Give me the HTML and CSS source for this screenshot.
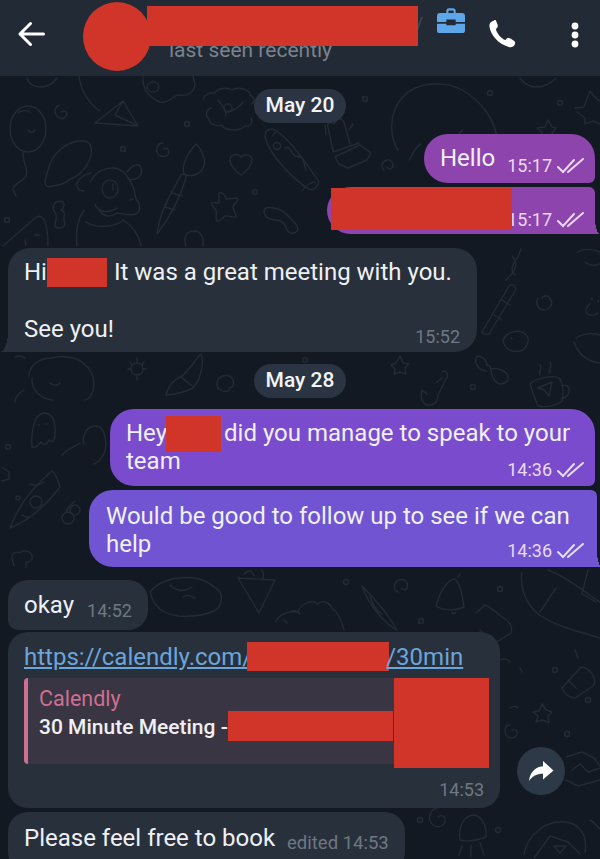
FILE: index.html
```html
<!DOCTYPE html>
<html lang="en">
<head>
<meta charset="utf-8">
<title>Chat</title>
<link rel="stylesheet" href="styles.css">
</head>
<body>
<div class="screen">
  <!-- faint doodle wallpaper behind the conversation -->
  <svg class="wallpaper" width="600" height="859" viewBox="0 0 600 859" fill="none" stroke="#222b36" stroke-width="1.400" stroke-linecap="round" stroke-linejoin="round">
    <!-- balloon -->
    <ellipse cx="28" cy="129" rx="18" ry="23"/><path d="M24 152c-3 2 0 5 0 9 2 6 4 10 2 15-2 5-12 7-13 13l3 7M18 113c4-3 9-3 12-1M28 130c2 3 5 3 7 0"/>
    <path d="M60 105c-5 1-7 8-2 12 4 3 9 0 9-3 0-3-4-4-6-2"/>
    <!-- paper plane -->
    <path d="M95 123l28-22 15 25zM95 123l43 3M123 101l-8 14 23 11"/>
    <path d="M79 76c2 15 10 28 21 35M27 78c3 12 22 12 30 0"/>
    <!-- hat -->
    <path d="M46 178c-3 8 2 10 7 8 6-1 13-2 17-7 6-1 14-8 18-16 5-9 5-20-3-22-8-1-20 2-29 13-5 5-8 14-10 24z"/>
    <circle cx="123" cy="149" r="2.500"/><circle cx="7" cy="220" r="2.500"/><circle cx="187" cy="124" r="2.500"/><circle cx="255" cy="192" r="2.500"/>
    <!-- dog -->
    <path d="M84 191c-6 0-8-4-7-8 2-5 8-9 14-10M127 172c3-3 6-8 11-7 4 1 5 8 1 12-3 3-7 3-11 2"/>
    <path d="M90 182c8-16 28-18 36-7 7 9 8 14 10 24 5 5 5 14-1 15-5 2-12 0-18-1-8 5-14 3-18-3M95 204c2 8 14 10 22 4"/><ellipse cx="110" cy="189" rx="8" ry="9"/><path d="M113 184v6M130 200l3-1"/>
    <path d="M84 210c-8 12-8 24-7 36M123 220c10 6 16 16 18 26M86 222c8 6 28 6 38-2"/>
    <path d="M55 203c4-3 8-2 9 1 0 3-1 5-3 6 3 1 4 4 3 7s3 8-1 10-9 1-8-3 2-7 1-10c-2-3-5-6-1-11z"/>
    <path d="M3 246l32-28c4-3 7-2 9 2 4 7 4 18 4 26M35 235h5M25 240l1 5"/>
    <!-- shell and palette -->
    <path d="M204 100c-2-4 6-8 11-7 2-5 12-6 17-3 8-4 18 0 18 5 4 2 6 5 2 9M211 108c-5 2-6 8-2 11 0 5 8 8 12 6 4 6 18 7 24 1 6 1 8-4 6-8M218 100c4 6 8 8 8 16M243 102c-4 6-10 9-17 10"/><circle cx="228" cy="108" r="4"/>
    <path d="M143 76c-1 14 7 22 17 26 10 2 13-8 20-7 8 2 14-4 15-10l-2-9"/><ellipse cx="153" cy="87" rx="6" ry="5"/>
    <path d="M163 143c-6 0-8 7-5 11 4 4 10 3 11-2 0-3-3-5-5-3"/>
    <!-- paint brush -->
    <path d="M157 234c3-24 14-40 24-59 2-2 6-1 5 3-5 17-15 38-29 56zM165 207l10 3M172 193l10 3M184 174c-3-8 3-20 12-30 5 4 10 16 8 22-3 8-12 12-20 8z"/>
    <path d="M230 160c0-6 8-7 11-3 3-3 11-3 11 3 0 6-7 12-11 15-4-3-11-8-11-15z"/>
    <path d="M219 193c3-1 6 1 7 6l11-1c3 2-3 6-4 9 0 3 4 8 3 10-4 1-8-2-11-1-3 2-6 7-8 5-2-3 0-8-1-11-2-2-5-5-4-7 3-1 5 0 7 0z"/>
    <path d="M264 211c0-4 6-4 10-3 9 1 14 8 20 14 4 4 6 9 0 11-5 1-7-2-8-6-2-4-6-7-10-7-4 0-12-2-12-9z"/>
    <path d="M186 246c-3-8 0-15 8-15s10 8 9 15"/>
    <!-- hot dog -->
    <path d="M265 137c0-8 6-9 10-7 14 8 30 32 43 50 2 4-4 12-9 9-14-8-40-34-44-52z"/><path d="M277 131c-3 2-4 3-4 5M285 148c4-2 6 3 8 6 3 4 8 1 10 6l3 10"/><circle cx="277" cy="146" r="3.500"/><path d="M303 190c2-4 8-8 12-8"/>
    <!-- cactus -->
    <path d="M333 151l-5-24c-2-4 4-6 6-3l3-4c2-2 6-1 7 2l6 22M326 135l-1-10M349 130l4-6M335 157l25-12 11 8-4 7-19 8-9-4zM333 152l26-9"/>
    <path d="M384 170c-4-3-2-9 3-10 4-1 8 4 5 8-2 2-4 1-5-1"/>
    <circle cx="365" cy="99" r="2.500"/><circle cx="490" cy="93" r="2.500"/><circle cx="560" cy="103" r="2.500"/>
    <!-- large creature -->
    <path d="M398 150c-8-12-10-36 4-52 12-16 42-18 60-8 18 10 34 30 35 50 1 12 14 16 22 20M409 160c4-4 4-12 12-16M463 130c-8 4-6 24 10 30"/>
    <path d="M575 108l9-1 6-16c3 4 7 9 10 10M577 112l8 6 0 6 8-3 7 3"/>
    <path d="M537 128l8-1 3-7 4 7 4 1-4 5 1 5-6-2-6 2 1-6z"/><path d="M520 78c8 12 24 12 36 0"/>
    <!-- right of the first card -->
    <path d="M482 332l27-46c4-3 8 0 6 5l-26 43c-3 1-6 0-7-2zM494 315l8 5M502 300l8 5"/>
    <path d="M506 280c8-8 14-14 6-24M515 275c-5-4-3-12 3-18l3-8"/>
    <path d="M538 298c-3 5 0 12 6 12s9-6 7-10c-2-5-7-5-9-2"/>
    <path d="M590 304c-3 2-4 5-4 8 2 4 8 4 12 1M592 298v2M598 300v2"/>
    <path d="M503 340c4-9 18-12 24-4 3 4 0 13-7 15-8 2-16-2-17-11zM511 338l1 1"/>
    <path d="M576 338c7-5 18-5 24-3M574 342c3 10 12 20 26 21"/>
    <path d="M578 252c6-4 15-3 22 0M585 262c5 4 10 4 15 2"/>
    <!-- bow, cup, hook -->
    <path d="M487 364c-2-7-10-10-11-6-2 5 3 12 10 13M491 369c6-2 16 2 17 8 1 6-8 9-12 5-3-3-5-9-5-13zM486 365c3 0 5 2 5 5"/>
    <path d="M530 384c6-6 25-10 30-5 3 6 4 15 2 22-6 5-18 7-24 5-3-7-6-15-8-22zM562 386c5-2 8 1 7 6-1 4-4 6-8 7M538 388l14-6-3 14-5-6z"/><path d="M540 365c3 4-2 6 0 10M550 362c3 4-2 7 0 11"/>
    <path d="M442 372c3-2 7 1 5 5l-9 18c0 7-5 11-10 10-6-1-8-8-6-15l5 4M442 378l-5 4"/>
    <path d="M396 363l4-7 3 7 6 1-4 4 1 6-6-2-6 2 1-5-4-4z"/>
    <!-- brush and ball -->
    <path d="M166 395c3-12 11-17 16-19 8-6 14-18 19-22 3 6 1 24-8 34-8 4-20 7-27 7zM181 376c3 4 8 8 13 11"/>
    <path d="M230 390c-6 4-14-1-13-7 1-7 10-10 15-5 3 4 2 10-3 10"/><circle cx="137" cy="369" r="6"/><path d="M137 358v4M128 369h3M137 380v-4M146 369h-3M130 362l2 3M144 362l-2 3"/>
    <path d="M29 376c0-10 10-18 22-18 16-4 32 0 40 14 6 12 2 26-6 28M32 378c-1 12 8 20 20 22M50 383c3 3 8 3 10 0M15 357c3-2 6-1 10 1M24 390c-5 3-9 7-9 12"/>
    <circle cx="305" cy="360" r="2.500"/><circle cx="473" cy="387" r="2.500"/>
    <!-- ghost, bird, pizza -->
    <path d="M32 447c-1-16 2-33 12-34 10 0 12 12 11 22-1 7-3 8-6 5-2 5-6 6-8 2-3 4-6 6-9 5zM38 425h1M46 424h1"/>
    <path d="M62 455c8-8 12-8 18-12M84 444c-2-8 2-18 12-18 8 0 9 10 10 18 0 8-4 16-12 20"/>
    <path d="M3 468l6 4 0 7-7 2"/>
    <path d="M10 528c8-22 24-42 42-57 4 3 6 9 8 16-14 18-32 34-50 41z"/><circle cx="36" cy="502" r="6"/><path d="M22 515l7 3M30 484c4 2 8 2 14-2"/>
    <circle cx="68" cy="518" r="6"/><circle cx="75" cy="510" r="5"/><path d="M66 512c1-4 5-7 9-11"/>
    <circle cx="18" cy="498" r="2"/><circle cx="8" cy="447" r="2.500"/>
    <path d="M14 566l-2-8c-1-5 5-7 8-5 3-4 11-2 12 3 1 4-2 7-6 6v5"/>
    <!-- lower wallpaper -->
    <path d="M150 592c8-10 22-14 30-14 16-2 28 2 40 14 3 6 1 14-4 18-10 5-24 7-38 6-14-2-24-8-28-24zM170 585c6 6 13 8 22 2M183 597c4-3 8-1 12 1"/>
    <path d="M238 578l37 2-16 33zM244 574c5-5 8-4 10 2M262 570c2 4 2 7 0 10"/>
    <path d="M276 622c3-8 12-11 22-10 1-6 12-14 20-8 4-5 12-1 14 4 6 4 10 14 12 22M290 612c3-2 7-2 10 2M284 620l3 3"/>
    <path d="M362 586c12 12 26 28 35 44-12-6-28-24-35-44zM370 596c2 8 6 14 12 18"/>
    <path d="M398 592c-5-2-5-9 1-12 6-2 10 3 8 8-2 3-5 2-5 0"/>
    <path d="M436 606c3-10 8-24 18-27 6 2 8 15 10 28-8 4-20 4-28-1zM452 612c0 2 3 2 4 0M458 577l2-3"/><circle cx="421" cy="621" r="2.500"/><circle cx="346" cy="582" r="2.500"/><circle cx="500" cy="589" r="2.500"/>
    <path d="M476 612c3 0 6-6 9-7 6 2 14 10 20 14 6 4 8 8 6 14l-16 10M480 630c6 4 10 12 12 14"/>
    <path d="M522 572c-2 14 2 30 16 42 20 14 44 18 62 24M548 570c18 6 36 22 52 32M588 570l-6 24 14 8M540 612l16-24"/>
    <path d="M562 688l18-20c3-2 8 0 12 6 3 5 4 9 1 12l-18 12c-5 0-11-4-13-10zM568 680l8 8M520 668l2 4M575 650l3 8"/>
    <path d="M533 712l6-1 3-7 4 6 6 2-4 4 1 7-6-3-7 2 2-6z"/>
    <path d="M510 725c-5 0-7 8-2 12 5 3 10-1 9-5-1-3-4-3-5-1"/><circle cx="555" cy="670" r="2.500"/><circle cx="567" cy="734" r="2.500"/><circle cx="588" cy="700" r="2.500"/>
    <path d="M566 757l16-5 12 6 6 8M572 770l8-6 8 8 12-4M566 780l12 6 22-6"/>
    <path d="M500 660c3-2 8-1 10 2M510 708c3-2 6-2 8 0"/>
    <path d="M460 840c-2-14 4-24 13-25 8 0 14 10 13 22-8 3-18 5-26 3zM462 846l-3 9M471 845v12M480 843l4 12"/>
    <path d="M437 808c-8 2-10 12-4 17 6 4 13 0 12-6-1-4-5-4-7-2"/>
    <path d="M524 854c4-20 22-34 42-32 14 2 22 14 19 30M534 858l16-22 18 6 12 12M554 846l6 7 6-7z"/><circle cx="420" cy="820" r="2.500"/><circle cx="498" cy="830" r="2.500"/>
    <path d="M590 820c4 2 7 6 10 9"/>
  </svg>

  <header class="topbar">
    <svg class="icon-back" width="28" height="28" viewBox="0 0 28 28" fill="none" stroke="#fff" stroke-width="3" stroke-linecap="round" stroke-linejoin="round"><path d="M25.500 14H3M12.500 3.500L2 14l10.500 10.500"/></svg>
    <div class="peer">
      <span class="avatar-mask"></span>
      <div class="peer-text">
        <span class="peer-name">V</span>
        <span class="peer-status">last seen recently</span>
      </div>
      <span class="name-mask"></span>
    </div>
    <div class="actions">
      <svg class="icon-case" width="28" height="27" viewBox="0 0 30 28"><path fill="#5ea6ea" d="M10 6V4c0-2 1-3 3-3h4c2 0 3 1 3 3v2h-2.200V4.200c0-.7-.4-1-1-1h-3.600c-.6 0-1 .3-1 1V6zM3 6h24c1.700 0 3 1.300 3 3v6.500H20v-2.500H10v2.500H0V9c0-1.700 1.300-3 3-3zM0 17.500h10V19h10v-1.500h10V25c0 1.700-1.300 2.500-3 2.500H3c-1.700 0-3-.8-3-2.500z"/><rect x="11.500" y="13.500" width="7" height="5" rx=".6" fill="#222a36"/></svg>
      <svg class="icon-call" width="27" height="29" viewBox="0 0 28 30"><path fill="#fff" d="M3 1.500c-2 1-2.800 3-2.500 5.500 1.300 9 9 17.500 20 21 2.500.5 5 0 6-2 .7-1.300.8-3 .2-3.800-1.500-1.500-4-3-6-3.600-1.300-.3-2.200.3-3 1.300l-.6.8c-4.500-1.500-9-7-10-11.500l1-.8c1-.8 1.300-1.800 1-3-.9-2.900-2.100-5.400-3.400-7.300C6.700.5 4.500.7 3 1.500z"/></svg>
      <svg class="icon-more" width="8" height="26" viewBox="0 0 8 26" fill="#fff"><circle cx="4" cy="4" r="3.400"/><circle cx="4" cy="13" r="3.400"/><circle cx="4" cy="22" r="3.400"/></svg>
    </div>
  </header>

  <main class="chat">
    <div class="day">May 20</div>

    <div class="bubble out tone-1 hello">
      <span class="text">Hello</span>
      <span class="meta"><span class="time">15:17</span><svg class="ticks" width="28" height="16" viewBox="0 0 28 16" fill="none" stroke="#ead9f1" stroke-width="2" stroke-linecap="round"><path d="M1 9l5 5L17 2M11 14L26 1"/></svg></span>
    </div>

    <div class="bubble out tone-1 masked tail">
      <span class="masked-name"></span>
      <span class="meta"><span class="time">15:17</span><svg class="ticks" width="28" height="16" viewBox="0 0 28 16" fill="none" stroke="#ead9f1" stroke-width="2" stroke-linecap="round"><path d="M1 9l5 5L17 2M11 14L26 1"/></svg></span>
    </div>

    <div class="bubble in tail-in greeting">
      <p class="text">Hi<span class="redact first"></span>It was a great meeting with you.<br><br>See you!</p>
      <span class="meta corner"><span class="time">15:52</span></span>
    </div>

    <div class="day second">May 28</div>

    <div class="bubble out tone-2 hey">
      <p class="text">Hey<span class="redact middle"></span>did you manage to speak to your<br>team</p>
      <span class="meta corner"><span class="time">14:36</span><svg class="ticks" width="28" height="16" viewBox="0 0 28 16" fill="none" stroke="#e6dcf6" stroke-width="2" stroke-linecap="round"><path d="M1 9l5 5L17 2M11 14L26 1"/></svg></span>
    </div>

    <div class="bubble out tone-3 tail follow">
      <p class="text">Would be good to follow up to see if we can<br>help</p>
      <span class="meta corner"><span class="time">14:36</span><svg class="ticks" width="28" height="16" viewBox="0 0 28 16" fill="none" stroke="#e6dcf6" stroke-width="2" stroke-linecap="round"><path d="M1 9l5 5L17 2M11 14L26 1"/></svg></span>
    </div>

    <div class="bubble in okay">
      <span class="text">okay</span>
      <span class="meta"><span class="time">14:52</span></span>
    </div>

    <div class="link-row">
      <div class="bubble in link-card">
        <p class="text"><a class="link">https://calendly.com/<span class="redact url"></span>/30min</a></p>
        <div class="preview">
          <div class="preview-body">
            <div class="preview-site">Calendly</div>
            <div class="preview-title">30 Minute Meeting -<span class="redact title"></span></div>
          </div>
          <div class="preview-thumb"></div>
        </div>
        <span class="meta end"><span class="time">14:53</span></span>
      </div>
      <button class="share" type="button" aria-label="Share">
        <svg width="26" height="22" viewBox="0 0 26 22"><path fill="#fff" d="M15 1l10.500 9.500L15 19.500v-5.700C9 13.700 4.500 15.800 1 21c.8-7.500 5-14 14-14.800z"/></svg>
      </button>
    </div>

    <div class="bubble in book">
      <span class="text">Please feel free to book</span>
      <span class="meta"><span class="time">edited 14:53</span></span>
    </div>
  </main>
</div>
</body>
</html>
```

FILE: styles.css
```css
html, body {
  margin: 0;
  padding: 0;
  background: #121a24;
}

.screen {
  position: relative;
  width: 600px;
  height: 859px;
  overflow: hidden;
  background: #121922;
  font-family: Roboto, "Noto Sans", sans-serif;
  color: #eff0f3;
}

.wallpaper {
  position: absolute;
  left: 0;
  top: 0;
}

/* top bar */
.topbar {
  position: relative;
  display: flex;
  align-items: flex-start;
  height: 76px;
  background: #222a36;
  box-sizing: border-box;
}

.icon-back {
  margin: 20px 0 0 18px;
  flex: none;
}

.peer {
  position: relative;
  flex: 1;
  margin-left: 37px;
  height: 76px;
}

.avatar-mask {
  position: absolute;
  left: 0;
  top: 2px;
  width: 68px;
  height: 69px;
  border-radius: 50%;
  background: #d13529;
}

.name-mask {
  position: absolute;
  left: 64px;
  top: 6px;
  width: 271px;
  height: 40px;
  background: #d13529;
}

.peer-text {
  display: flex;
  flex-direction: column;
  padding: 13px 0 0 86px;
}

.peer-name {
  align-self: flex-end;
  margin-right: 14px;
  font-size: 18px;
  line-height: 22px;
  color: #3c444f;
}

.peer-status {
  margin-top: 3px;
  font-size: 21px;
  line-height: 24px;
  color: #7b838d;
}

.actions {
  display: flex;
  align-items: flex-start;
  flex: none;
}

.icon-case {
  margin-top: 7px;
}

.icon-call {
  margin: 20px 0 0 24px;
}

.icon-more {
  margin: 22px 21px 0 55px;
}

/* conversation */
.chat {
  position: relative;
  display: flex;
  flex-direction: column;
  padding-top: 13px;
}

.day {
  align-self: center;
  height: 34px;
  padding: 0 12px;
  border-radius: 17px;
  background: #2a3442;
  font-size: 21px;
  font-weight: 500;
  line-height: 33px;
  color: #f3f4f6;
}

.day.second {
  margin-top: 12px;
}

.bubble {
  --fill: #28303c;
  position: relative;
  box-sizing: border-box;
  padding: 10px 16px 11px;
  font-size: 24px;
  line-height: 28px;
  border-radius: 22px;
}

.text {
  margin: 0;
}

.meta {
  display: inline-flex;
  align-items: center;
  font-size: 18px;
  line-height: 22px;
}

.corner {
  position: absolute;
  right: 10px;
  bottom: 5px;
}

.end {
  display: flex;
  justify-content: flex-end;
  margin-top: 15px;
  padding-right: 5px;
}

.ticks {
  margin-left: 5px;
}

.in {
  align-self: flex-start;
  margin-left: 8px;
  background: var(--fill);
}

.in .time {
  color: #6f7882;
}

.in .corner {
  right: 17px;
  bottom: 4px;
}

.out {
  align-self: flex-end;
  margin-right: 5px;
  background: var(--fill);
  border-radius: 24px 24px 6px 24px;
}

.out .time {
  color: #ead9f1;
}

.tone-1 {
  --fill: #8d44ad;
}

.tone-2 {
  --fill: #7a4bcd;
}

.tone-3 {
  --fill: #7054d2;
}

.hello {
  display: flex;
  align-items: flex-end;
  width: 171px;
  height: 49px;
  margin-top: 11px;
  padding-top: 11px;
  padding-right: 10px;
}

.hello .meta {
  margin: 0 0 -5px auto;
}

.masked {
  display: flex;
  justify-content: flex-end;
  align-items: flex-end;
  width: 268px;
  height: 47px;
  margin-top: 4px;
  padding: 0 10px 3px 0;
  border-radius: 24px 6px 0 24px;
}

.masked-name {
  position: absolute;
  left: 4px;
  top: 1px;
  width: 181px;
  height: 42px;
  background: #d13529;
}

/* small curl at the foot of the last bubble in a run */
.tail::after,
.tail-in::after {
  content: "";
  position: absolute;
  bottom: 0;
}

.tail::after {
  right: -5px;
  width: 5px;
  height: 16px;
  background: radial-gradient(ellipse 5px 16px at 100% 0, transparent 98%, var(--fill) 100%);
}

.tail-in::after {
  left: -8px;
  width: 8px;
  height: 20px;
  background: radial-gradient(ellipse 8px 20px at 0 0, transparent 98%, var(--fill) 100%);
}

.greeting {
  width: 469px;
  height: 104px;
  margin-top: 14px;
  border-radius: 22px 22px 22px 0;
}

.redact {
  display: inline-block;
  background: #d13529;
  vertical-align: top;
}

.first {
  width: 60px;
  height: 29px;
  margin: 0 7px 0 0;
}

.hey {
  width: 485px;
  height: 77px;
  margin-top: 11px;
  border-radius: 24px 24px 6px 24px;
}

.middle {
  width: 55px;
  height: 36px;
  margin: -3px 3px -5px -1px;
}

.follow {
  width: 508px;
  height: 77px;
  margin: 4px 3px 0 0;
  padding: 12px 16px 9px 17px;
  border-radius: 24px 6px 0 24px;
}

.follow .corner {
  right: 12px;
}

.okay {
  display: flex;
  align-items: flex-end;
  width: 140px;
  height: 50px;
  margin-top: 13px;
  border-radius: 20px 20px 20px 10px;
}

.okay .meta {
  margin: 0 0 -3px 13px;
}

.link-row {
  display: flex;
  align-items: flex-end;
  margin-top: 2px;
}

.link-card {
  width: 492px;
  height: 176px;
  padding-top: 11px;
  padding-right: 11px;
  border-radius: 20px;
}

.link {
  color: #6aa6dc;
  text-decoration: underline;
  text-underline-offset: 2px;
}

.url {
  width: 142px;
  height: 29px;
  margin-top: -1px;
  margin-left: -5px;
  margin-right: -3px;
}

.preview {
  display: flex;
  height: 86px;
  margin-top: 7px;
  border-left: 4px solid #cf6f91;
  border-radius: 4px;
  background: #3a3543;
}

.preview-body {
  flex: 1;
  min-width: 0;
  padding: 7px 0 0 11px;
}

.preview-site {
  font-size: 21.500px;
  line-height: 28px;
  color: #cf6f91;
}

.preview-title {
  display: flex;
  font-size: 21px;
  font-weight: 500;
  line-height: 28px;
  margin-top: 0;
  color: #eef0f2;
}

.title {
  width: 165px;
  height: 30px;
  margin-top: -2px;
  flex: none;
}

.preview-thumb {
  flex: none;
  width: 95px;
  height: 90px;
  background: #d13529;
}

.share {
  width: 48px;
  height: 48px;
  margin: 0 0 13px 17px;
  padding: 2px 0 0;
  border: none;
  border-radius: 50%;
  background: #2e3948;
}

.book {
  display: flex;
  align-items: baseline;
  width: 397px;
  height: 60px;
  margin-top: 4px;
  padding-top: 12px;
  border-radius: 20px;
}

.book .meta {
  margin-left: 12px;
  position: relative;
  top: 3px;
  font-size: 18.500px;
}
```
